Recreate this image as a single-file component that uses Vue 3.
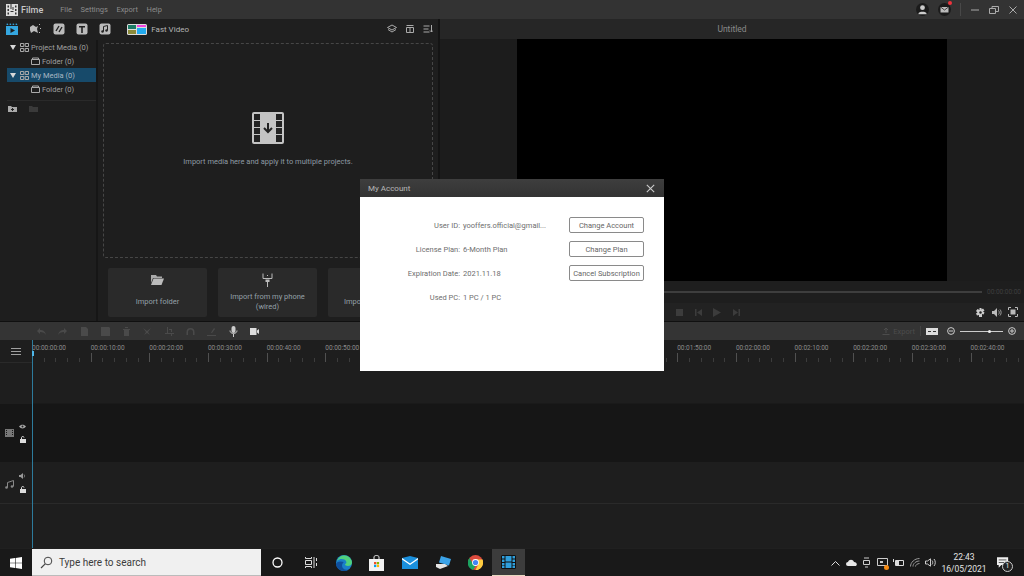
<template>
  <div class="app">
    <header class="titlebar">
      <svg class="logo" width="12" height="12" viewBox="0 0 12 12"><path fill="#ddd" d="M0 0h12v12H0z"/><path fill="#333" d="M1.500 1.500h1.500v2H1.500zM1.500 5h1.500v2H1.500zM1.500 8.500h1.500v2H1.500zM9 1.500h1.500v2H9zM9 5h1.500v2H9zM9 8.500h1.500v2H9zM4.500 0h1v5h-1zM4.500 7h3v1h-3zM6.500 3h1v3h-1z"/></svg>
      <span class="brand">Filme</span>
      <nav class="menu">
        <span v-for="m in menu" :key="m">{{ m }}</span>
      </nav>
      <div class="win">
        <span class="avatar">
          <svg width="13" height="13" viewBox="0 0 13 13"><circle cx="6.500" cy="6.500" r="6.500" fill="#1b1b1b"/><circle cx="6.500" cy="4.700" r="2.400" fill="#ccc"/><path fill="#ccc" d="M2.500 10.500c0-2.500 8-2.500 8 0v.8h-8z"/></svg>
        </span>
        <span class="avatar mail">
          <svg width="13" height="13" viewBox="0 0 13 13"><circle cx="6.500" cy="6.500" r="6.500" fill="#1b1b1b"/><path fill="#bbb" d="M2.500 4h8v5.500h-8z"/><path fill="none" stroke="#222" stroke-width=".8" d="M2.500 4l4 3 4-3"/></svg>
          <i class="dot"></i>
        </span>
        <span class="win-sep"></span>
        <svg width="10" height="10" viewBox="0 0 10 10"><path stroke="#aaa" d="M1 5h8"/></svg>
        <svg width="10" height="10" viewBox="0 0 10 10"><path fill="none" stroke="#aaa" d="M.5 3.500h6v5h-6zM3 3.500v-2h6.500v5H6.500"/></svg>
        <svg width="10" height="10" viewBox="0 0 10 10"><path stroke="#aaa" d="M1.500 1.500l7 7M8.500 1.500l-7 7"/></svg>
      </div>
    </header>

    <section class="workspace">
      <div class="library">
        <div class="lib-tabs">
          <svg class="tab" width="12" height="12" viewBox="0 0 12 12"><path fill="#35a7e0" d="M0 3h12v9H0zM1 0l1.500 2H.5zM4 0l1.500 2h-2zM7 0l1.500 2h-2zM10 0l1.500 2h-2z"/><path fill="#1e1e1e" d="M4.500 5v5L9 7.500z"/></svg>
          <svg class="tab" width="12" height="12" viewBox="0 0 12 12"><path fill="#bbb" d="M1 4l3-2 3 2 2-1-1 3 1 4-4-2-3 2-1-3zM10 1h1v1h-1zM11 5h1v1h-1zM10 9h1v1h-1z"/></svg>
          <svg class="tab" width="12" height="12" viewBox="0 0 12 12"><rect x=".5" y=".5" width="11" height="11" rx="2" fill="#bbb"/><path stroke="#222" stroke-width="1.400" d="M3 8l3-5M6 9l3-5"/></svg>
          <svg class="tab" width="12" height="12" viewBox="0 0 12 12"><rect x=".5" y=".5" width="11" height="11" rx="2" fill="#bbb"/><path fill="#222" d="M3 3h6v1.500H6.800V10H5.200V4.500H3z"/></svg>
          <svg class="tab" width="12" height="12" viewBox="0 0 12 12"><rect x=".5" y=".5" width="11" height="11" rx="2" fill="#bbb"/><path fill="none" stroke="#222" d="M4.500 8.500V3.500l4-1v5"/><circle cx="3.500" cy="8.500" r="1.200" fill="#222"/><circle cx="7.500" cy="7.500" r="1.200" fill="#222"/></svg>
          <span class="fast">
            <svg width="20" height="11" viewBox="0 0 20 11"><rect width="20" height="11" rx="1.500" fill="#ddd"/><path fill="#1c7a66" d="M1 1h8v4H1z"/><path fill="#8a8a3a" d="M1 6h8v4H1z"/><path fill="#ee44dd" d="M10 1h9v2h-9z"/><path fill="#22aaee" d="M10 4h9v6h-9z"/></svg>
            Fast Video
          </span>
          <span class="lib-tools">
            <svg width="10" height="10" viewBox="0 0 10 10"><path fill="none" stroke="#aaa" d="M5 1l4.500 2.500L5 6 .5 3.500zM1 5.500L5 8l4-2.500"/></svg>
            <svg width="10" height="10" viewBox="0 0 10 10"><path fill="none" stroke="#aaa" d="M1.500 1.500h7M1.500 3.500h7v5h-7zM5 3.500v5"/></svg>
            <svg width="10" height="10" viewBox="0 0 10 10"><path fill="none" stroke="#aaa" d="M.5 2h6M.5 5h5M.5 8h6M8.500 1v7M7 6.500L8.500 8 10 6.500"/></svg>
          </span>
        </div>
        <div class="lib-body">
          <aside class="tree">
            <template v-for="node in tree" :key="node.name">
              <div class="node" :class="{ selected: node.selected }">
                <i class="caret"></i>
                <svg width="9" height="9" viewBox="0 0 9 9"><path fill="none" stroke="#aaa" d="M.5 .5h3.300v3H.5zM5.200 .5h3.300v3H5.200zM.5 5.500h3.300v3H.5zM5.200 5.500h3.300v3H5.200z"/></svg>
                <span>{{ node.name }} (0)</span>
              </div>
              <div class="node sub">
                <svg width="9" height="8" viewBox="0 0 9 8"><path fill="none" stroke="#aaa" d="M.5 2.500h8v5h-8zM1.500 2.500V1h6v1.500"/></svg>
                <span>Folder (0)</span>
              </div>
            </template>
            <div class="tree-foot">
              <svg width="9" height="7" viewBox="0 0 9 7"><path fill="#aaa" d="M0 1h3l1 1h5v5H0z"/><path stroke="#222" d="M4.500 3v3M3 4.500h3"/></svg>
              <svg width="9" height="7" viewBox="0 0 9 7"><path fill="#3a3a3a" d="M0 1h3l1 1h5v5H0z"/></svg>
            </div>
          </aside>
          <div class="import">
            <div class="drop">
              <svg width="32" height="32" viewBox="0 0 32 32"><rect width="32" height="32" rx="2" fill="#c4c4c4"/><path fill="#222" d="M2 2h6v6H2zM2 9h6v6H2zM2 16h6v6H2zM2 23h6v7H2zM24 2h6v6h-6zM24 9h6v6h-6zM24 16h6v6h-6zM24 23h6v7h-6z"/><path fill="none" stroke="#222" stroke-width="2" d="M16 11v9M12 16l4 4 4-4"/></svg>
              <p>Import media here and apply it to multiple projects.</p>
            </div>
            <div class="cards">
              <div class="card">
                <span class="card-icon">
                  <svg width="13" height="10" viewBox="0 0 13 10"><path fill="#aaa" d="M0 0h5l1 1.500h5V3H2L0 8z"/><path fill="#bbb" d="M2.500 3.500H13L10.500 10H0z"/></svg>
                </span>
                <p>Import folder</p>
              </div>
              <div class="card">
                <span class="card-icon">
                  <svg width="11" height="14" viewBox="0 0 11 14"><path fill="none" stroke="#bbb" d="M1 .5v5h9v-5"/><path fill="#bbb" d="M5 2h1v1H5zM3.500 6.500h4V9h-4zM5 9h1v5H5z"/></svg>
                </span>
                <p>Import from my phone<br>(wired)</p>
              </div>
              <div class="card">
                <span class="card-icon">
                  <svg width="13" height="10" viewBox="0 0 13 10"><rect width="9" height="10" fill="#aaa"/></svg>
                </span>
                <p>Import from camera</p>
              </div>
            </div>
          </div>
        </div>
      </div>

      <div class="player">
        <div class="player-title">Untitled</div>
        <div class="preview"><div class="screen"></div></div>
        <div class="seek">
          <span class="seek-bar"></span>
          <span class="seek-time">00:00:00:00</span>
        </div>
        <div class="controls">
          <span class="transport">
            <svg width="7" height="7" viewBox="0 0 7 7"><path fill="#3c3c3c" d="M0 0h7v7H0z"/></svg>
            <svg width="7" height="7" viewBox="0 0 7 7"><path fill="#3c3c3c" d="M0 0h1.500v7H0zM7 0v7L2 3.500z"/></svg>
            <svg width="8" height="9" viewBox="0 0 8 9"><path fill="#3c3c3c" d="M0 0l8 4.500L0 9z"/></svg>
            <svg width="7" height="7" viewBox="0 0 7 7"><path fill="#3c3c3c" d="M5.500 0H7v7H5.500zM0 0v7l5-3.500z"/></svg>
          </span>
          <span class="player-tools">
            <svg width="9" height="9" viewBox="0 0 9 9"><path fill="#ccc" d="M3.500 0h2v1.500l1.500-1 1.500 2-1.500 1 1.500 1-1 2-1.500-.5V9h-3V7L1 7.500 0 5.500l1.500-1L0 3l1.500-2L3.500 2z"/><circle cx="4.500" cy="4.500" r="1.200" fill="#222"/></svg>
            <svg width="10" height="9" viewBox="0 0 10 9"><path fill="#bbb" d="M0 3h2l3-3v9L2 6H0z"/><path fill="none" stroke="#bbb" stroke-width=".8" d="M6.500 2.500c1 1 1 3 0 4M8 1.500c1.500 1.500 1.500 4.500 0 6"/></svg>
            <svg width="10" height="10" viewBox="0 0 10 10"><path fill="none" stroke="#bbb" d="M.5 3V.5H3M7 .5h2.500V3M9.500 7v2.500H7M3 9.500H.5V7"/><path fill="#bbb" d="M2.500 2.500h5v5h-5z"/></svg>
          </span>
        </div>
      </div>
    </section>

    <section class="timeline">
      <div class="tl-toolbar">
        <svg v-for="d in editIcons" :key="d" width="9" height="9" viewBox="0 0 9 9"><path fill="#4a4a4a" :d="d"/></svg>
        <svg width="9" height="11" viewBox="0 0 9 11"><rect x="2.500" width="4" height="7" rx="2" fill="#ccc"/><path fill="none" stroke="#ccc" d="M1 4.500c0 4 7 4 7 0M4.500 8v3"/></svg>
        <svg width="9" height="7" viewBox="0 0 9 7"><path fill="#ddd" d="M0 0h6.500v7H0zM7 2.500L9 1v5L7 4.500z"/></svg>
        <span class="zoombar">
          <span class="export">
            <svg width="8" height="8" viewBox="0 0 8 8"><path fill="none" stroke="#4c4c4c" d="M4 6V1M2 3l2-2 2 2M.5 7.500h7"/></svg>
            Export
          </span>
          <span class="tl-sep"></span>
          <svg class="fit" width="12" height="7" viewBox="0 0 12 7"><rect width="12" height="7" fill="#ddd"/><path stroke="#333" d="M2 3.500h3M7 3.500h3"/></svg>
          <svg class="zoom-out" width="8" height="8" viewBox="0 0 8 8"><circle cx="4" cy="4" r="3.400" fill="none" stroke="#ccc"/><path stroke="#ccc" d="M2 4h4"/></svg>
          <span class="slider"><i></i></span>
          <svg class="zoom-in" width="8" height="8" viewBox="0 0 8 8"><circle cx="4" cy="4" r="3.400" fill="none" stroke="#ccc"/><path stroke="#ccc" d="M2 4h4M4 2v4"/></svg>
        </span>
      </div>
      <div class="tl-body">
        <div class="tl-head">
          <div class="tl-corner">
            <span class="burger"><i></i><i></i><i></i></span>
          </div>
          <div class="tl-gap"></div>
          <div class="tl-label video">
            <svg width="9" height="8" viewBox="0 0 9 8"><path fill="#777" d="M0 0h9v8H0z"/><path fill="#1a1a1a" d="M1 1h1v1H1zM1 3h1v1H1zM1 5h1v1H1zM7 1h1v1H7zM7 3h1v1H7zM7 5h1v1H7z"/></svg>
            <span class="tl-flags">
              <svg width="7" height="5" viewBox="0 0 7 5"><path fill="#aaa" d="M0 2.500C2 0 5 0 7 2.500 5 5 2 5 0 2.500z"/><circle cx="3.500" cy="2.500" r="1" fill="#222"/></svg>
              <svg width="6" height="7" viewBox="0 0 6 7"><path fill="#ddd" d="M0 3h6v4H0z"/><path fill="none" stroke="#ddd" d="M1.500 3V1.500c0-1.300 2.500-1.300 2.500 0"/></svg>
            </span>
          </div>
          <div class="tl-label audio">
            <svg class="note" width="9" height="9" viewBox="0 0 9 9"><path fill="none" stroke="#888" d="M2.500 7.500V2.500l6-2v6"/><circle cx="1.500" cy="7.500" r="1.300" fill="#888"/><circle cx="7" cy="6.500" r="1.300" fill="#888"/></svg>
            <span class="tl-flags">
              <svg width="7" height="6" viewBox="0 0 7 6"><path fill="#999" d="M0 2h1.500L4 0v6L1.500 4H0z"/><path fill="none" stroke="#999" stroke-width=".7" d="M5 1.500c.8.800.8 2.200 0 3"/></svg>
              <svg width="6" height="7" viewBox="0 0 6 7"><path fill="#ddd" d="M0 3h6v4H0z"/><path fill="none" stroke="#ddd" d="M1.500 3V1.500c0-1.300 2.500-1.300 2.500 0"/></svg>
            </span>
          </div>
          <div class="tl-rest"></div>
        </div>
        <div class="tl-tracks">
          <div class="ruler">
            <div class="times">
              <span v-for="t in times" :key="t">{{ t }}</span>
            </div>
            <div class="ticks"></div>
          </div>
          <div class="track video"></div>
          <div class="track audio"></div>
          <div class="track rest"></div>
          <div class="playhead"><i></i></div>
        </div>
      </div>
    </section>

    <footer class="taskbar">
      <span class="start">
        <svg width="12" height="12" viewBox="0 0 12 12"><path fill="#fff" d="M0 1.700l5-.7v4.700H0zM5.600 .9L12 0v5.700H5.600zM0 6.300h5V11l-5-.7zM5.600 6.300H12V12l-6.400-.9z"/></svg>
      </span>
      <div class="search">
        <svg width="13" height="13" viewBox="0 0 13 13"><circle cx="8" cy="5" r="3.800" fill="none" stroke="#444"/><path stroke="#444" stroke-width="1.200" d="M5.200 7.800L1 12"/></svg>
        <span>Type here to search</span>
      </div>
      <span class="task">
        <svg width="11" height="11" viewBox="0 0 11 11"><circle cx="5.500" cy="5.500" r="4.500" fill="none" stroke="#fff" stroke-width="1.300"/></svg>
      </span>
      <span class="task">
        <svg width="12" height="11" viewBox="0 0 12 11"><path fill="none" stroke="#ddd" d="M.5 0v1.500h6V0M.5 11V9.500h6V11M.5 3.500h6v4h-6zM9 0v11M11.500 1v3M11.500 6v3"/></svg>
      </span>
      <span class="task">
        <svg width="16" height="16" viewBox="0 0 16 16"><circle cx="8" cy="8" r="8" fill="#1a7fc9"/><path fill="#4fd17e" d="M1 6c1-4 5-6 8-5.500 4 .6 7 3.500 7 7 0 2.500-2 3.500-4 3.500-2 0-3-1-3-2 1 0 2-1 1-3C9 4 4 3 1 6z"/><path fill="#0f4f9c" d="M0 9c0 4 4 7 8 7 2 0 3-.5 4-1.500-3 1-6-1-6-4 0-1.500 1-3 2-3.500C5 6 1 6 0 9z"/></svg>
      </span>
      <span class="task">
        <svg width="15" height="16" viewBox="0 0 15 16"><path fill="none" stroke="#eee" d="M5 4V2c0-2 5-2 5 0v2"/><path fill="#f2f2f2" d="M0 4h15v12H0z"/><path fill="#f25022" d="M5 7h2.300v2.300H5z"/><path fill="#7fba00" d="M7.800 7h2.300v2.300H7.800z"/><path fill="#00a4ef" d="M5 9.800h2.300v2.300H5z"/><path fill="#ffb900" d="M7.800 9.800h2.300v2.300H7.800z"/></svg>
      </span>
      <span class="task">
        <svg width="16" height="13" viewBox="0 0 16 13"><path fill="#1a8fdc" d="M0 2l8-2 8 2v11H0z"/><path fill="#fff" d="M0 2l8 5.500L16 2v1.500L8 9 0 3.500z"/></svg>
      </span>
      <span class="task">
        <svg width="16" height="13" viewBox="0 0 16 13"><path fill="#3ba3e8" d="M6 0l10 3-2 6.500L4 6.500z"/><path fill="#e5e5e5" d="M1 8h9l3 2-8 3-4-2z"/></svg>
      </span>
      <span class="task">
        <svg width="15" height="15" viewBox="0 0 15 15"><circle cx="7.500" cy="7.500" r="7.500" fill="#dd4b3e"/><path fill="#ffcd40" d="M7.500 4.500H14.500A7.500 7.500 0 0 1 7.500 15L10 10z"/><path fill="#1aa260" d="M1.500 3L5 9l3 1.500L5 15A7.500 7.500 0 0 1 1.500 3z"/><circle cx="7.500" cy="7.500" r="3.400" fill="#fff"/><circle cx="7.500" cy="7.500" r="2.600" fill="#4285f4"/></svg>
      </span>
      <span class="task active">
        <svg width="15" height="14" viewBox="0 0 15 14"><rect width="15" height="14" rx="1.500" fill="#111"/><path fill="#2f9fdc" d="M1 1h2.500v2.500H1zM1 4.500h2.500V7H1zM1 8h2.500v2.500H1zM1 11h2.500v2H1zM11.500 1H14v2.500h-2.500zM11.500 4.500H14V7h-2.500zM11.500 8H14v2.500h-2.500zM11.500 11H14v2h-2.500zM4.500 1h6v5.500h-6zM4.500 7.500h6V13h-6z"/></svg>
      </span>
      <div class="tray">
        <svg width="9" height="6" viewBox="0 0 9 6"><path fill="none" stroke="#ddd" d="M.5 5.500l4-4 4 4"/></svg>
        <svg width="11" height="7" viewBox="0 0 11 7"><path fill="#e8e8e8" d="M2 7a2 2 0 0 1 0-4C3 0 7 0 8 3c3 0 4 4 1 4z"/></svg>
        <svg width="9" height="11" viewBox="0 0 9 11"><path fill="none" stroke="#ccc" d="M1.500 3.500h6v4h-6zM2 1h5M3 10h3"/></svg>
        <span class="tray-badge">
          <svg width="11" height="10" viewBox="0 0 11 10"><path fill="none" stroke="#ccc" d="M.5 .5h10v7h-10z"/><path fill="#ccc" d="M3 3h3v2H3z"/></svg>
          <i></i>
        </span>
        <svg width="11" height="7" viewBox="0 0 11 7"><path fill="none" stroke="#ddd" d="M2.500 1.500h8v5h-8z"/><path fill="#ddd" d="M0 0h1v3H0zM3 2h3v4H3z"/></svg>
        <svg width="10" height="9" viewBox="0 0 10 9"><path fill="none" stroke="#999" d="M.5 8.500c0-4 4-8 9-8M3 8.500c0-3 3-5.500 6.500-5.500M5.500 8.500c0-1.500 2-3 4-3"/></svg>
        <svg width="11" height="9" viewBox="0 0 11 9"><path fill="none" stroke="#ccc" d="M.5 3h2L5.500 .8v7.400L2.500 6h-2zM7 2.500c1 1 1 3 0 4M9 1c1.700 2 1.700 5 0 7"/></svg>
      </div>
      <div class="clock">
        <span>22:43</span>
        <span>16/05/2021</span>
      </div>
      <span class="notify">
        <svg width="12" height="11" viewBox="0 0 14 12"><path fill="#eee" d="M0 0h13v9H5l-3 3V9H0z"/><path stroke="#444" d="M2 3h9M2 6h7"/></svg>
        <b>1</b>
      </span>
    </footer>

    <div class="dialog">
      <div class="dialog-head">
        <span>My Account</span>
        <svg width="9" height="9" viewBox="0 0 9 9"><path stroke="#ccc" stroke-width="1.100" d="M.8 .8l7.400 7.400M8.200 .8L.8 8.200"/></svg>
      </div>
      <div class="dialog-body">
        <div v-for="row in account" :key="row.label" class="acc-row">
          <span class="acc-label">{{ row.label }}:</span>
          <span class="acc-value">{{ row.value }}</span>
          <button v-if="row.action" class="acc-btn">{{ row.action }}</button>
        </div>
      </div>
    </div>
  </div>
</template>

<script setup>
const menu = ['File', 'Settings', 'Export', 'Help']

const tree = [
  { name: 'Project Media', selected: false },
  { name: 'My Media', selected: true },
]

const editIcons = [
  'M0 4l3-3v2c3 0 5 1 6 5-1-2-3-3-6-3v2z',
  'M9 4L6 1v2C3 3 1 4 0 8c1-2 3-3 6-3v2z',
  'M1 0h5l2 2v7H1z',
  'M0 0h8l1 1v8H0zM4 5h5v4H4z',
  'M1 2h7v1H1zM2 3h5v6H2zM3 0h3v1H3z',
  'M0 1l4 3 4-3-3 4 2 3-3-2-3 2 2-3z',
  'M2 0h1v6h6v1H7v2H6V7H0V6h2zM4 2h3v3H6V3H4z',
  'M4.500 1a4 4 0 0 1 4 4v3H7V5a2.500 2.500 0 0 0-5 0v3H.5V5a4 4 0 0 1 4-4z',
  'M0 8h9v1H0zM5 4l2-3 1 1-3 4H4z',
]

const times = Array.from({ length: 17 }, (_, i) => {
  const s = i * 10
  const mm = String(Math.floor(s / 60)).padStart(2, '0')
  const ss = String(s % 60).padStart(2, '0')
  return `00:${mm}:${ss}:00`
})

const account = [
  { label: 'User ID', value: 'yooffers.official@gmail...', action: 'Change Account' },
  { label: 'License Plan', value: '6-Month Plan', action: 'Change Plan' },
  { label: 'Expiration Date', value: '2021.11.18', action: 'Cancel Subscription' },
  { label: 'Used PC', value: '1 PC / 1 PC', action: '' },
]
</script>

<style>
html, body { margin: 0; background: #1e1e1e; }
</style>

<style scoped>
.app {
  position: relative;
  width: 1024px;
  height: 576px;
  overflow: hidden;
  display: flex;
  flex-direction: column;
  background: #1e1e1e;
  color: #a8a8a8;
  font-family: Roboto, "Noto Sans", sans-serif;
  font-size: 7.5px;
}
svg { display: block; flex-shrink: 0; }
p { margin: 0; }

.titlebar {
  height: 19px;
  flex-shrink: 0;
  display: flex;
  align-items: center;
  padding-left: 6px;
  background: #333333;
}
.brand { margin-left: 3px; font-size: 9px; color: #c8c8c8; font-weight: 500; }
.menu { display: flex; gap: 8.5px; margin-left: 17px; color: #8c8c8c; font-size: 7.5px; }
.win { margin-left: auto; display: flex; align-items: center; gap: 9px; padding-right: 6px; }
.avatar { position: relative; display: block; }
.mail .dot {
  position: absolute;
  top: -2px;
  right: -1px;
  width: 4px;
  height: 4px;
  border-radius: 50%;
  background: #f0333d;
}
.win-sep { width: 1px; height: 13px; background: #484848; }

.workspace { height: 303px; flex-shrink: 0; display: flex; border-bottom: 1px solid #101010; box-sizing: border-box; }
.library { width: 438px; display: flex; flex-direction: column; border-right: 2px solid #141414; }
.lib-tabs {
  height: 21px;
  flex-shrink: 0;
  display: flex;
  align-items: center;
  padding: 0 0 1px 6px;
  gap: 11.25px;
  background: #1f1f1f;
  box-sizing: border-box;
}
.fast { display: flex; align-items: center; gap: 4px; margin-left: 5px; color: #b4b4b4; font-size: 8px; }
.lib-tools { margin-left: auto; display: flex; gap: 8px; padding-right: 5px; }
.lib-body { flex: 1; display: flex; min-height: 0; }

.tree { flex-shrink: 0; padding-left: 7px; box-sizing: border-box; border-right: 2px solid #161616; width: 98px; }
.node {
  height: 14px;
  display: flex;
  align-items: center;
  gap: 2px;
  padding-left: 3px;
  color: #a0a0a0;
  white-space: nowrap;
}
.node.sub { padding-left: 24px; }
.node.selected { background: #174a6a; color: #a8b8c4; }
.caret {
  width: 0;
  height: 0;
  margin-right: 2px;
  border-left: 3px solid transparent;
  border-right: 3px solid transparent;
  border-top: 5px solid #d8d8d8;
}
.tree-foot {
  margin-top: 4px;
  padding-top: 4px;
  display: flex;
  gap: 12px;
  border-top: 1px solid #2a2a2a;
  padding-left: 1px;
}

.import { flex: 1; min-width: 0; display: flex; flex-direction: column; padding: 3px 5px 4px; }
.drop {
  height: 215px;
  flex-shrink: 0;
  box-sizing: border-box;
  border: 1px dashed #464646;
  border-radius: 3px;
  display: flex;
  flex-direction: column;
  align-items: center;
  padding-top: 68px;
  gap: 13px;
  color: #8e9aa4;
}
.cards { display: flex; gap: 11px; margin-top: 10px; padding-left: 5px; }
.card {
  width: 99px;
  height: 49px;
  flex-shrink: 0;
  display: flex;
  flex-direction: column;
  align-items: center;
  box-sizing: border-box;
  border-radius: 2px;
  background: #2a2a2a;
  text-align: center;
  color: #94a0a8;
}
.card-icon { height: 23px; display: flex; align-items: center; }
.card p {
  height: 21px;
  display: flex;
  align-items: center;
  line-height: 10px;
}

.player { flex: 1; min-width: 0; display: flex; flex-direction: column; }
.player-title {
  height: 20px;
  flex-shrink: 0;
  display: flex;
  align-items: center;
  justify-content: center;
  background: #262626;
  color: #8a8a8a;
  font-size: 8.5px;
}
.preview { height: 242px; flex-shrink: 0; display: flex; justify-content: center; background: #1c1c1c; }
.screen { width: 430px; background: #000; }
.seek { height: 22px; flex-shrink: 0; display: flex; align-items: center; gap: 5px; padding: 0 3px 0 0; }
.seek-bar { flex: 1; height: 2px; background: #3e3e3e; }
.seek-time { color: #3f3f3f; font-size: 6.5px; }
.controls {
  flex: 1;
  display: flex;
  align-items: center;
  justify-content: space-between;
  padding: 0 6px 0 236px;
  background: #222222;
}
.transport, .player-tools { display: flex; align-items: center; }
.transport { gap: 11.5px; }
.player-tools { gap: 6.5px; }

.timeline { flex: 1; min-height: 0; display: flex; flex-direction: column; }
.tl-toolbar {
  height: 18px;
  flex-shrink: 0;
  display: flex;
  align-items: center;
  gap: 12.3px;
  padding-left: 37px;
  background: #343434;
}
.zoombar { margin-left: auto; display: flex; align-items: center; padding-right: 8px; }
.export { display: flex; align-items: center; gap: 3px; color: #4c4c4c; }
.tl-sep { width: 1px; height: 10px; background: #444; margin-left: 5px; }
.fit { margin-left: 5px; }
.zoom-out { margin-left: 9px; }
.slider { position: relative; width: 43px; height: 1px; margin: 0 5px; background: #ccc; }
.slider i {
  position: absolute;
  left: 28px;
  top: -1px;
  width: 3px;
  height: 3px;
  border-radius: 50%;
  background: #eee;
}

.tl-body { flex: 1; min-height: 0; display: flex; }
.tl-head { width: 32px; flex-shrink: 0; display: flex; flex-direction: column; }
.tl-corner {
  height: 22px;
  display: flex;
  align-items: center;
  justify-content: center;
  border-bottom: 1px solid #2a2a2a;
}
.burger { display: flex; flex-direction: column; gap: 2px; width: 10px; }
.burger i { height: 1px; background: #a0a0a0; display: block; }
.tl-gap { height: 41px; }
.tl-label { display: flex; align-items: center; gap: 5px; padding-left: 5px; }
.tl-label.video { height: 58px; background: #161616; }
.tl-label.audio { height: 42px; border-bottom: 1px solid #2a2a2a; box-sizing: border-box; }
.tl-flags { display: flex; flex-direction: column; align-items: center; gap: 7px; }
.note { margin-top: 3px; }
.tl-rest { flex: 1; }

.tl-tracks { position: relative; flex: 1; min-width: 0; display: flex; flex-direction: column; }
.ruler { height: 64px; flex-shrink: 0; border-bottom: 1px solid #1a1a1a; box-sizing: border-box; }
.times { display: flex; padding-top: 4px; height: 13px; box-sizing: border-box; color: #8c8c8c; font-size: 6.5px; white-space: nowrap; line-height: 9px; }
.times span { width: 58.667px; flex-shrink: 0; }
.ticks {
  height: 9px;
  background:
    repeating-linear-gradient(90deg, #505050 0 1px, transparent 1px 58.667px) 0 0 / 100% 100% no-repeat,
    repeating-linear-gradient(90deg, #3c3c3c 0 1px, transparent 1px 11.733px) 0 5px / 100% 4px no-repeat;
}
.track.video { height: 58px; background: #161616; }
.track.audio { height: 42px; border-bottom: 1px solid #2a2a2a; box-sizing: border-box; }
.track.rest { flex: 1; }
.playhead { position: absolute; left: 0; top: 0; bottom: 0; width: 1px; background: #2d7b9c; }
.playhead i {
  position: absolute;
  left: 0;
  top: 11px;
  width: 2px;
  height: 5px;
  background: #4fb8ea;
}

.taskbar {
  height: 28px;
  flex-shrink: 0;
  display: flex;
  align-items: stretch;
  background: #191919;
  border-top: 1px solid #202020;
  box-sizing: border-box;
  color: #eee;
}
.start { width: 32px; display: flex; align-items: center; justify-content: center; }
.search {
  width: 229px;
  display: flex;
  align-items: center;
  gap: 6px;
  padding-left: 8px;
  box-sizing: border-box;
  background: #f0f0f0;
  border-bottom: 1px solid #bbb;
  color: #3c3c3c;
  font-size: 10px;
}
.task { width: 33px; display: flex; align-items: center; justify-content: center; }
.task.active { background: #3c3c3c; border-bottom: 1px solid #e8d8c0; box-sizing: border-box; }
.tray { margin-left: auto; display: flex; align-items: center; gap: 5.5px; }
.tray-badge { position: relative; display: block; }
.tray-badge i {
  position: absolute;
  right: -1px;
  bottom: -2px;
  width: 5px;
  height: 5px;
  border-radius: 50%;
  background: #f58a12;
}
.clock {
  width: 56px;
  display: flex;
  flex-direction: column;
  align-items: center;
  justify-content: center;
  gap: 2px;
  font-size: 8.5px;
  line-height: 10px;
  color: #e4e4e4;
}
.notify { position: relative; width: 32px; display: flex; align-items: center; padding-left: 5px; box-sizing: border-box; }
.notify b {
  position: absolute;
  left: 10px;
  top: 12px;
  width: 11px;
  height: 11px;
  border-radius: 50%;
  border: 1px solid #ccc;
  box-sizing: border-box;
  background: #222;
  font-size: 7px;
  font-weight: 400;
  line-height: 9px;
  text-align: center;
}

.dialog {
  position: absolute;
  left: 360px;
  top: 179px;
  width: 304px;
  height: 192px;
  display: flex;
  flex-direction: column;
  background: #fff;
}
.dialog-head {
  height: 18px;
  flex-shrink: 0;
  display: flex;
  align-items: center;
  justify-content: space-between;
  padding: 0 9px 0 8px;
  background: linear-gradient(#3e3e3e, #333);
  color: #b8b8b8;
  font-size: 8px;
}
.dialog-body { flex: 1; padding-top: 20px; }
.acc-row {
  height: 16px;
  margin-bottom: 8px;
  display: grid;
  grid-template-columns: 100px 103px 75px;
  align-items: center;
  column-gap: 3px;
  color: #6e6e6e;
  font-size: 7.5px;
  white-space: nowrap;
}
.acc-label { text-align: right; }
.acc-btn {
  height: 16px;
  padding: 0;
  border: 1px solid #8a8a8a;
  border-radius: 2px;
  background: #fff;
  color: #666;
  font: inherit;
}
</style>
